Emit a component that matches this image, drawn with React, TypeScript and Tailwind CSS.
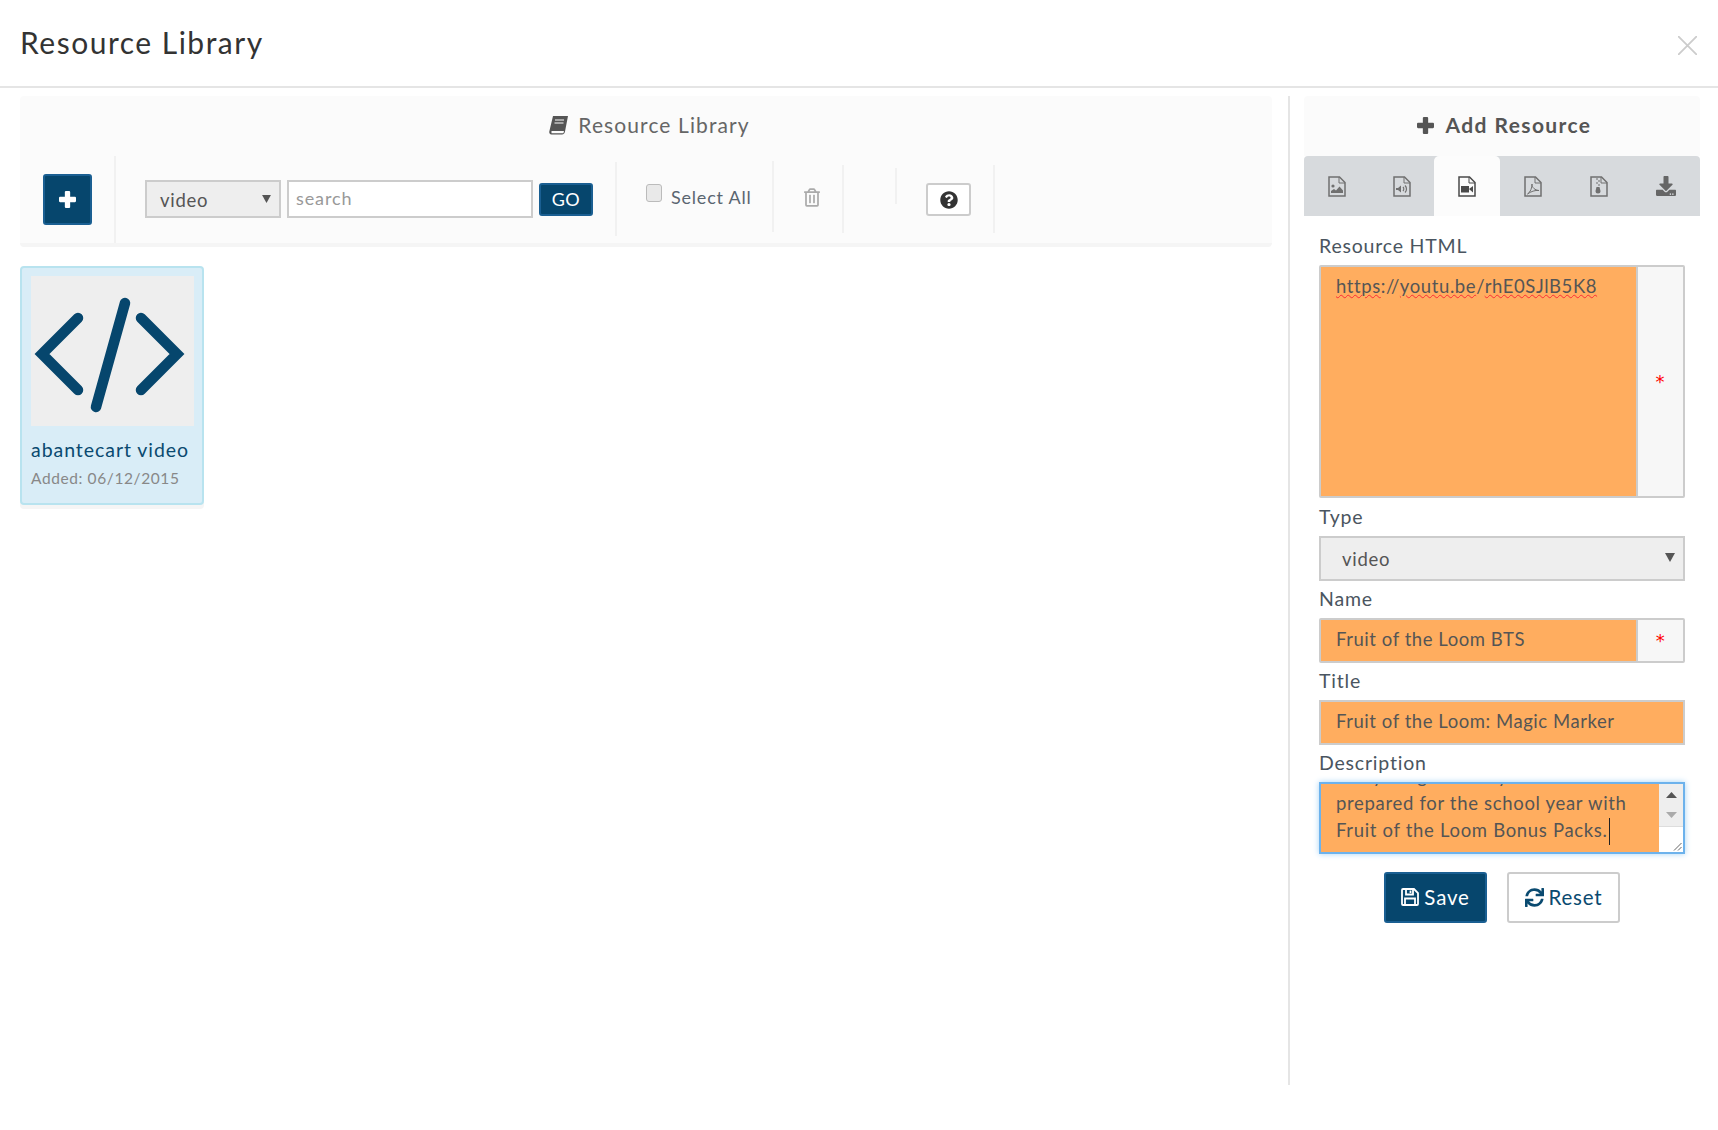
import React from "react";
import { FaQuestionCircle, FaSync, FaRegTrashAlt, FaDownload } from "react-icons/fa";

const Caret = ({ cls }: { cls: string }) => (
  <svg viewBox="0 0 10 9" className={cls} fill="#555"><polygon points="0,0 10,0 5,9" /></svg>
);

const PlusIcon = ({ size, color }: { size: number; color: string }) => (
  <svg viewBox="0 0 16 16" width={size} height={size} fill={color}>
    <rect x="5.500" y="0" width="5" height="16" rx="1" />
    <rect x="0" y="5.500" width="16" height="5" rx="1" />
  </svg>
);

const SaveIcon = () => (
  <svg viewBox="0 0 18 18" width="18" height="18" fill="none" stroke="#fff" strokeWidth="1.800">
    <path d="M2 1h11l4 4v11a1 1 0 0 1-1 1H2a1 1 0 0 1-1-1V2a1 1 0 0 1 1-1z" />
    <path d="M5 1.500v5h7v-5" />
    <path d="M9.500 2.500v2.500" />
    <path d="M4 17v-6.500h10V17" />
  </svg>
);

const FileOutline = ({ children, color }: { children?: React.ReactNode; color: string }) => (
  <svg viewBox="0 0 18 21" width="18" height="21" fill="none" stroke={color} strokeWidth="1.5">
    <path d="M1 1h10.500l5.500 5.500V20H1z" />
    <path d="M11 1v6h6" strokeWidth="1" />
    {children}
  </svg>
);

const Orange = "bg-[#ffad5f]";
const Wavy = "underline decoration-wavy decoration-red-500 decoration-1";
const Star = "flex flex-1 items-center justify-center border-l-2 border-[#ccc] bg-[#f7f7f7] font-['DejaVu_Sans',sans-serif] text-[18px] text-[#f00]";

function Tabs() {
  const g = "#707070";
  return (
    <div className="grid h-[60px] grid-cols-[65px_65px_66px_66px_66px_68px] rounded-t-[4px] bg-[#d7dadd]">
      <div className="flex items-center justify-center">
        <FileOutline color={g}>
          <circle cx="5" cy="10" r="1.600" fill={g} stroke="none" />
          <path d="M3 17v-2l3-2 2 1.500 3.500-4 3.500 4v2.500z" fill={g} stroke="none" />
        </FileOutline>
      </div>
      <div className="flex items-center justify-center">
        <FileOutline color={g}>
          <path d="M3 12h2l3-2.500v7l-3-2.500h-2z" fill={g} stroke="none" />
          <path d="M10 11c1 1 1 3 0 4M12 9.500c2 2 2 5 0 7" strokeWidth="1.200" />
        </FileOutline>
      </div>
      <div className="flex items-center justify-center rounded-t-[5px] bg-[#fcfcfc]">
        <FileOutline color="#4a4a4a">
          <rect x="3" y="10" width="8" height="6.500" fill="#4a4a4a" stroke="none" />
          <path d="M11 13l4-3v6.500z" fill="#4a4a4a" stroke="none" />
        </FileOutline>
      </div>
      <div className="flex items-center justify-center">
        <FileOutline color={g}>
          <path d="M3.500 18c3-2 4.500-6 4.500-10 0 4 3 6 7 6.500-4-.5-8 1-11.500 3.500z" strokeWidth="1" />
        </FileOutline>
      </div>
      <div className="flex items-center justify-center">
        <FileOutline color={g}>
          <path d="M7 2v2M9 4v2M7 6v2M9 8v2" strokeWidth="1" />
          <path d="M6.500 11h3l1 4a2.500 2.500 0 1 1-5 0z" fill={g} stroke="none" />
        </FileOutline>
      </div>
      <div className="flex items-center justify-center">
        <FaDownload className="h-[20px] w-[20px] text-[#666]" />
      </div>
    </div>
  );
}

export default function App() {
  return (
    <div className="h-[1130px] w-full overflow-hidden bg-white font-['Lato',sans-serif] text-[#555] tracking-[0.55px]">
      <header className="flex h-[88px] items-center justify-between border-b-2 border-[#e5e5e5] pl-[20px] pr-[21px]">
        <h1 className="pb-[2px] text-[30px] tracking-[1.500px] text-[#333]">Resource Library</h1>
        <svg viewBox="0 0 19 19" width="19" height="19" stroke="#ccc" strokeWidth="1.800" className="mt-[4px]">
          <path d="M0 0l19 19M19 0L0 19" />
        </svg>
      </header>

      <div className="flex pt-[8px]">
        {/* left */}
        <div className="ml-[20px] w-[1252px]">
          <div className="rounded-[4px] border-b-4 border-[#f5f5f5] bg-[#fbfbfb]">
            <div className="flex h-[60px] items-center justify-center gap-[10px] pb-[2px] pl-[7px] text-[21px] tracking-[1.100px] text-[#666]">
              <svg viewBox="0 0 19 19" width="19" height="19">
                <path d="M4 0h15l-3 15.500c-.3 1.800-1.500 3-3 3H2.500C.8 18.500 0 17 .3 15.500z" fill="#555" />
                <path d="M2.500 15h12.500l-.6 2.300H2.500z" fill="#fbfbfb" />
                <path d="M6 4h9M5.500 7h9" stroke="#fbfbfb" strokeWidth="1" />
              </svg>
              <span>Resource Library</span>
            </div>
            <div className="flex h-[87px]">
              <div className="w-[94px] pl-[23px] pt-[18px]">
                <div className="flex h-[51px] w-[49px] items-center justify-center rounded-[3px] border-2 border-[#1a5f92] bg-[#06466d]">
                  <PlusIcon size={17} color="#fff" />
                </div>
              </div>
              <div className="flex w-[501px] items-start border-l-2 border-[#f1f1f1] pl-[29px] pt-[24px]">
                <div className="flex h-[38px] w-[136px] items-center justify-between border-2 border-[#ccc] bg-[#eee] pl-[13px] pr-[8px] pt-[3px] text-[18.500px] tracking-[0.7px]">
                  <span>video</span>
                  <Caret cls="h-[8px] w-[9px] -mt-[3px]" />
                </div>
                <div className="ml-[6px] flex h-[38px] w-[246px] items-center border-2 border-[#ccc] bg-white pb-[1px] pl-[7px] text-[18px] tracking-[0.9px] text-[#999]">
                  search
                </div>
                <div className="ml-[6px] mt-[3px] flex h-[33px] w-[54px] items-center justify-center rounded-[3px] border-2 border-[#1a5f92] bg-[#06466d] text-[18px] text-white">
                  GO
                </div>
              </div>
              <div className="mt-[6px] flex h-[74px] w-[157px] border-l-2 border-[#f1f1f1] pl-[29px] pt-[22px]">
                <div className="h-[18px] w-[16px] rounded-[3px] border border-[#bbb] bg-[#e9e9e9]" />
                <span className="ml-[9px] text-[18px] tracking-[0.8px] text-[#5a6570]">Select All</span>
              </div>
              <div className="mt-[5px] flex h-[71px] w-[70px] border-l-2 border-[#f1f1f1] pl-[30px] pt-[27px]">
                <FaRegTrashAlt className="h-[19px] w-[16px] text-[#aaa]" />
              </div>
              <div className="mt-[9px] h-[68px] w-[53px] border-l-2 border-[#f1f1f1]" />
              <div className="mt-[12px] flex h-[36px] w-[98px] border-l-2 border-[#f1f1f1] pl-[29px]">
                <div className="mt-[15px] flex h-[33px] w-[45px] shrink-0 items-center justify-center rounded-[3px] border-2 border-[#ccc] bg-white">
                  <FaQuestionCircle className="h-[18px] w-[18px] text-[#333]" />
                </div>
              </div>
              <div className="mt-[9px] h-[68px] border-l-2 border-[#f1f1f1]" />
            </div>
          </div>

          <div className="mt-[19px] h-[239px] w-[184px] rounded-[4px] border-2 border-[#b8e3ef] bg-[#d9edf7] px-[9px] pt-[8px] shadow-[0_4px_0_#f5f5f5]">
            <div className="flex h-[150px] w-[163px] items-center justify-center bg-[#eee]">
              <svg viewBox="0 0 163 150" width="163" height="150" fill="none" stroke="#06466d" strokeWidth="10.500" strokeLinecap="round" strokeLinejoin="miter">
                <path d="M47 42 11 78l36 36M110 42l36 36-36 36M94 27 65 131" />
              </svg>
            </div>
            <div className="mt-[11px] text-[19.500px] leading-[26px] tracking-[0.95px] text-[#0a4a70]">abantecart video</div>
            <div className="mt-[5px] text-[15.500px] leading-[20px] tracking-[0.6px] text-[#888]">Added: 06/12/2015</div>
          </div>
        </div>

        {/* divider */}
        <div className="ml-[16px] h-[989px] w-[2px] bg-[#e5e5e5]" />

        {/* right */}
        <div className="ml-[14px] w-[396px]">
          <div className="flex h-[60px] items-center justify-center gap-[12px] rounded-t-[4px] bg-[#fbfbfb] pb-[2px] pl-[4px] text-[21px] font-bold tracking-[1.400px] text-[#555]">
            <PlusIcon size={17} color="#555" />
            <span>Add Resource</span>
          </div>
          <Tabs />
          <div className="px-[15px] text-[19.500px] tracking-[0.8px]">
            <div className="mt-[15px] h-[34px] text-[#4a5560]">Resource HTML</div>
            <div className="flex h-[233px] rounded-[2px] border-2 border-[#ccc]">
              <div className={`w-[315px] ${Orange} pl-[15px] pt-[6px] text-[18.500px] tracking-[0.6px]`}>
                <span className={Wavy}>https</span>://<span className={Wavy}>youtu.be</span>/<span className={Wavy}>rhE0SJlB5K8</span>
              </div>
              <div className={Star}>*</div>
            </div>
            <div className="mt-[4px] h-[34px] text-[#4a5560]">Type</div>
            <div className="flex h-[45px] items-center justify-between border-2 border-[#ccc] bg-[#eee] pl-[21px] pr-[8px] pt-[3px] text-[18.500px] tracking-[0.7px]">
              <span>video</span>
              <Caret cls="h-[9px] w-[10px] -mt-[5px]" />
            </div>
            <div className="mt-[3px] h-[34px] text-[#4a5560]">Name</div>
            <div className="flex h-[45px] rounded-[2px] border-2 border-[#ccc] text-[18.500px] tracking-[0.55px]">
              <div className={`flex w-[315px] items-center pb-[1px] pl-[15px] ${Orange}`}>Fruit of the Loom BTS</div>
              <div className={Star}>*</div>
            </div>
            <div className="mt-[3px] h-[34px] text-[#4a5560]">Title</div>
            <div className={`flex h-[45px] items-center border-2 border-[#ccc] pb-[1px] pl-[15px] text-[18.500px] tracking-[0.55px] ${Orange}`}>Fruit of the Loom: Magic Marker</div>
            <div className="mt-[3px] h-[34px] text-[#4a5560]">Description</div>
            <div className={`relative flex h-[72px] overflow-hidden border-2 border-[#6cb2ec] shadow-[0_0_6px_#a6d3f5] ${Orange}`}>
              <div className="-mt-[21px] flex-1 pl-[15px] text-[18.500px] leading-[27px] tracking-[0.68px]">
                <div>Get your girls ready</div>
                <div>prepared for the school year with</div>
                <div className="relative inline-block">
                  Fruit of the Loom Bonus Packs.
                  <span className="absolute right-[-2px] top-[1px] h-[27px] w-[1px] bg-[#222]" />
                </div>
              </div>
              <div className="flex h-full w-[24px] flex-col bg-white">
                <div className="flex h-[43px] flex-col items-center gap-[14px] border-b border-[#ddd] bg-[#eee] pt-[8px]">
                  <svg viewBox="0 0 11 6" width="11" height="6" fill="#555"><polygon points="0,6 11,6 5.500,0" /></svg>
                  <svg viewBox="0 0 11 6" width="11" height="6" fill="#aaa"><polygon points="0,0 11,0 5.500,6" /></svg>
                </div>
                <div className="flex flex-1 items-end justify-end pb-[1px] pr-[1px]">
                  <svg viewBox="0 0 9 9" width="9" height="9" stroke="#666" strokeWidth="1"><path d="M8.500 1 1 8.500M8.500 5 5 8.500" /></svg>
                </div>
              </div>
            </div>
            <div className="mt-[18px] flex gap-[20px] pl-[65px]">
              <div className="flex h-[51px] w-[103px] items-center justify-center gap-[5px] rounded-[3px] border-2 border-[#1a5f92] bg-[#06466d] pb-[1px] text-[20.500px] text-white">
                <SaveIcon />
                <span>Save</span>
              </div>
              <div className="flex h-[51px] w-[113px] items-center justify-center gap-[5px] rounded-[3px] border-2 border-[#ccc] bg-white pb-[1px] text-[20.500px] text-[#0a4a70]">
                <FaSync className="h-[19px] w-[19px]" />
                <span>Reset</span>
              </div>
            </div>
          </div>
        </div>
      </div>
    </div>
  );
}
